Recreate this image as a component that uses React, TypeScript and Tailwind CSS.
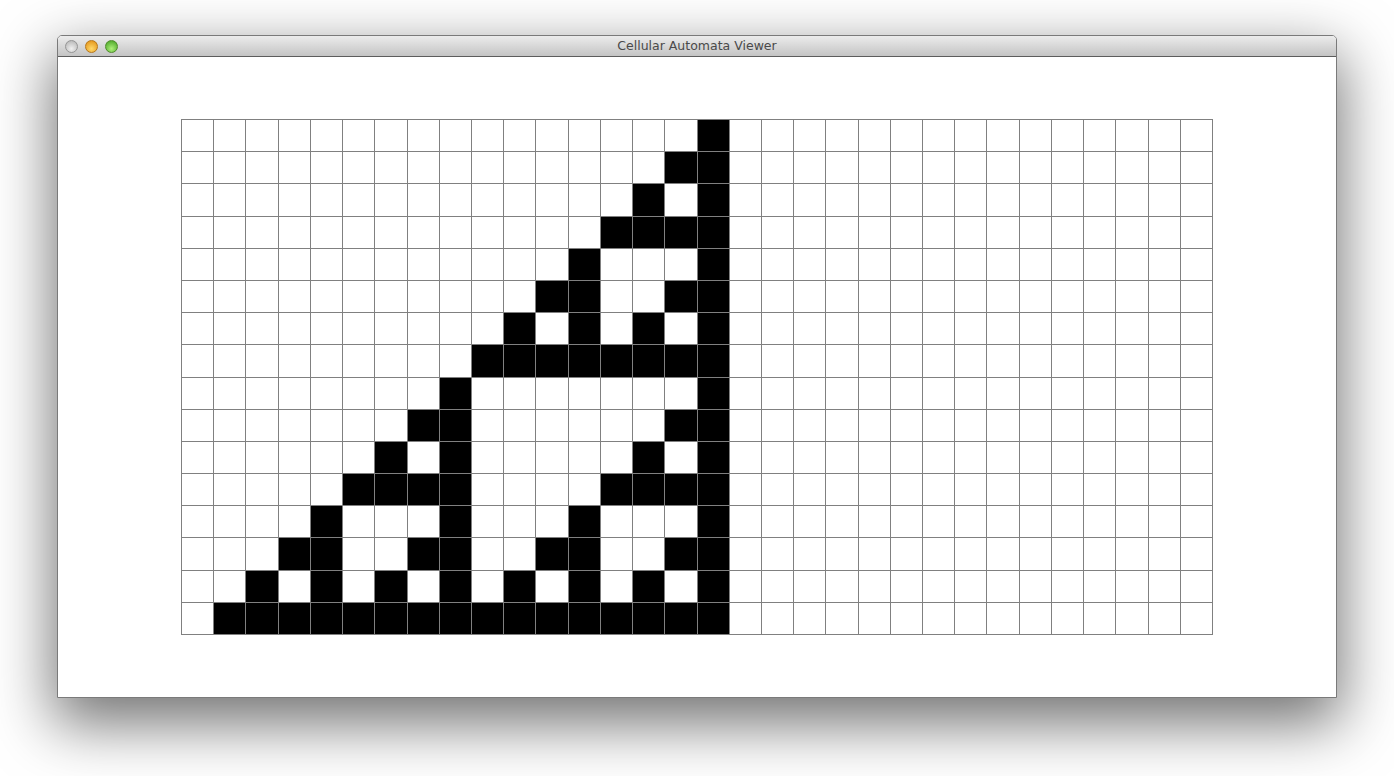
import React from "react";

const COLS = 32;
const ROWS = 16;

function buildGrid(): boolean[][] {
  const g: boolean[][] = [];
  const first = Array.from({ length: COLS }, (_, c) => c === 16);
  g.push(first);
  for (let r = 1; r < ROWS; r++) {
    const prev = g[r - 1];
    const row = Array.from({ length: COLS }, (_, c) => {
      const a = prev[c];
      const b = c + 1 < COLS ? prev[c + 1] : false;
      return a !== b;
    });
    g.push(row);
  }
  return g;
}

const grid = buildGrid();

function Light({ cls }: { cls: string }) {
  return <div className={`w-[13px] h-[13px] rounded-full ${cls}`} />;
}

export default function App() {
  return (
    <div className="w-[1394px] h-[776px] bg-white overflow-hidden pl-[57px] pt-[35px]">
      <div className="w-[1280px] h-[663px] flex flex-col rounded-t-[5px] border border-[#7a7a7a] bg-white shadow-[0_22px_60px_4px_rgba(0,0,0,0.55)]">
        <div className="relative h-[21px] shrink-0 flex items-center rounded-t-[4px] border-b border-[#5c5c5c] bg-gradient-to-b from-[#ececec] to-[#c4c4c4]">
          <div className="flex items-center gap-[7px] pl-[7px]">
            <Light cls="bg-[radial-gradient(circle_at_50%_70%,#f0f0f0,#b0b0b0)] border border-[#959595]" />
            <Light cls="bg-[radial-gradient(circle_at_50%_70%,#ffd96a,#e08c10)] border border-[#b7771a]" />
            <Light cls="bg-[radial-gradient(circle_at_50%_70%,#aef07a,#3f9e1e)] border border-[#4f8a2c]" />
          </div>
          <div className="absolute inset-0 flex items-center justify-center text-[12.5px] text-[#4a4a4a] font-['DejaVu_Sans',sans-serif] pt-[1px]">
            Cellular Automata Viewer
          </div>
        </div>
        <div className="flex-1 flex items-center justify-center">
          <div
            className="grid gap-px p-px bg-[#808080] w-[1032px] h-[516px]"
            style={{ gridTemplateColumns: `repeat(${COLS}, 1fr)`, gridTemplateRows: `repeat(${ROWS}, 1fr)` }}
          >
            {grid.flatMap((row, r) =>
              row.map((on, c) => (
                <div key={`${r}-${c}`} className={on ? "bg-black" : "bg-white"} />
              ))
            )}
          </div>
        </div>
      </div>
    </div>
  );
}
